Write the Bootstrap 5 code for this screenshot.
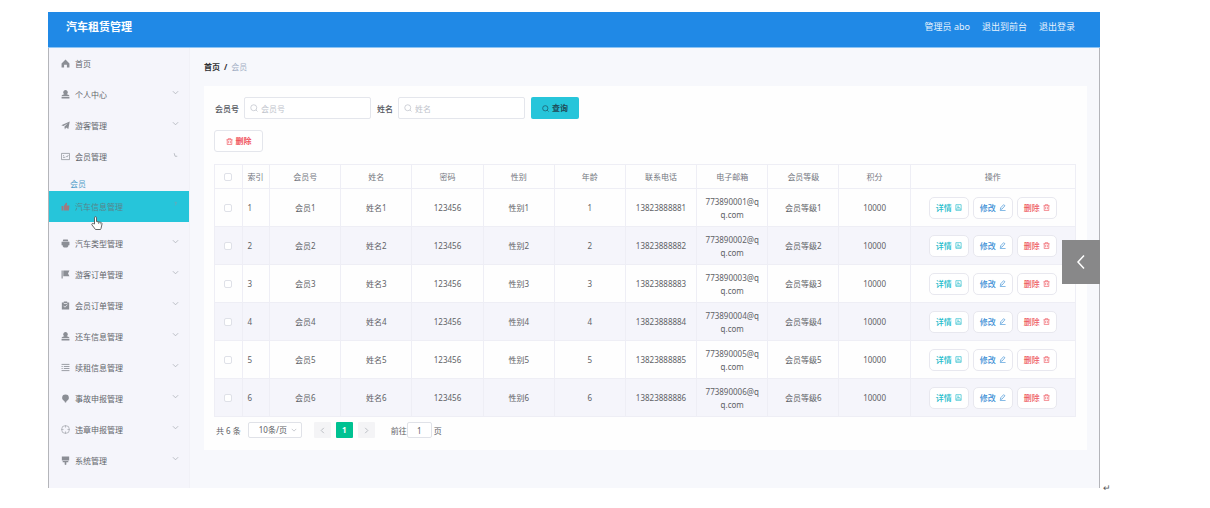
<!DOCTYPE html>
<html lang="zh-CN">
<head>
<meta charset="utf-8">
<meta name="viewport" content="width=device-width, initial-scale=1">
<title>汽车租赁管理</title>
<link href="https://cdn.jsdelivr.net/npm/bootstrap@5.3.0/dist/css/bootstrap.min.css" rel="stylesheet">
<style>
  body { font-family: "Noto Sans", "Noto Sans CJK SC", sans-serif; font-size: 8px; line-height: 13px; color: #606266; background: #fff; }
  a { text-decoration: none; }
  button, input, select { font-family: inherit; }
  svg { fill: none; stroke: currentColor; flex: none; }
  .sheet { padding: 12px 0 16px 48px; }
  .frame { min-width: 0; }
  .sheet-margin { width: 110px; padding-left: 3px; font-size: 9px; line-height: 9px; color: #555; margin-bottom: -4px; }
  .topbar { height: 36px; background: #2089e6; border-bottom: 1px solid #8cc4f4; padding: 0 25px 6px 18px; }
  .brand { font-size: 11px; font-weight: 700; color: #fff; }
  .topbar-links { font-size: 9px; gap: 12px; color: #e6f2fd; }
  .topbar-links a { color: inherit; }
  .shell { background: #f7f8fc; border: solid #b4b5ba; border-width: 0 1px; }
  .sidebar { width: 141px; background: #f5f5fb; border-right: 1px solid #f1f1f7; padding-bottom: 12px; }
  .menu-item { height: 31px; padding: 0 10px 1px 12px; color: #63666c; position: relative; }
  .menu-item .glyph { width: 9px; height: 9px; color: #8b8e95; margin-right: 5px; }
  .menu-item .caret { width: 7px; height: 7px; color: #b4b7be; margin-bottom: 3px; }
  .menu-item.current { background: #26c5da; color: #56858c; margin-bottom: 6px; }
  .menu-item.current .glyph { color: #a07a80; }
  .menu-item.current .caret { color: #70a5b5; }
  .submenu { height: 19px; padding: 5px 0 0 21px; line-height: 13px; }
  .submenu a { color: #4f9cc8; }
  .hand { position: absolute; left: 42px; top: 25px; z-index: 2; }
  .workspace { padding: 0 12px 37px 14px; }
  .crumbs { height: 38px; padding-bottom: 2px; }
  .crumbs a { color: #303133; font-weight: 600; }
  .crumbs .sep { color: #303133; font-weight: 700; }
  .crumbs .here { color: #a3afc4; }
  .panel { background: #fefefe; padding: 11px 11px 12px 10px; }
  .search { gap: 5px; margin-bottom: 11px; }
  .search label { font-weight: 500; color: #55585e; padding-left: 1px; }
  .field { width: 127px; position: relative; }
  .field svg { position: absolute; left: 6px; top: 7px; color: #c0c4cc; }
  .field input { height: 22px; padding: 0 6px 0 16px; font-size: 8px; border: 1px solid #e4e6ec; border-radius: 2px; }
  .field input::placeholder { color: #c0c4cc; }
  .act { font-size: 8px; line-height: 12px; height: 22px; padding: 0; border-radius: 2px; display: inline-flex; align-items: center; justify-content: center; gap: 3px; }
  .act-query { width: 48px; background: #26c5da; color: #1e4a58; font-weight: 600; margin-left: 1px; }
  .act-remove { width: 49px; background: #fff; border-color: #e4e6ec; color: #f0525c; font-weight: 600; border-radius: 3px; }
  .act-row { width: 40px; background: #fff; border-color: #e8e8ef; border-radius: 5px; font-weight: 500; }
  .tone-view { color: #26bccb; } .tone-edit { color: #3b8fd6; } .tone-drop { color: #ee5a62; }
  .grid-table { table-layout: fixed; margin: 12px 0 5px; font-size: 8px; line-height: 13px; border-color: #eeeef5; text-align: center; }
  .grid-table > :not(caption) > * > * { padding: 0 8px; color: #606266; background: none; box-shadow: none; word-break: break-all; vertical-align: middle; }
  .grid-table > thead > tr > th { height: 24px; font-weight: 400; color: #74777e; }
  .grid-table td { height: 38px; }
  .grid-table > tbody > tr:nth-child(even) { background: #f5f5fb; }
  .grid-table > :not(caption) > * > .c-idx { text-align: left; padding: 0 0 0 5px; }
  .grid-table > :not(caption) > * > .c-pick { padding: 0; }
  .grid-table > :not(caption) > * > .c-act { padding: 0; }
  .tick { width: 8px; height: 8px; margin: 0 auto; display: block; border: 1px solid #dfe1e8; border-radius: 1px; }
  .pager { padding-left: 2px; color: #606266; }
  .pager select { width: 54px; height: 16px; font-size: 8px; line-height: 12px; padding: 0 14px 0 10px; border: 1px solid #e0e2e8; border-radius: 2px; color: #606266; margin: 0 12px 0 7px; background-size: 6px 6px; background-position: right 4px center;
    background-image: url("data:image/svg+xml,%3Csvg xmlns='http://www.w3.org/2000/svg' viewBox='0 0 8 8'%3E%3Cpath d='M1 2.5 4 5.5 7 2.5' fill='none' stroke='%23b8bbc3'/%3E%3C/svg%3E"); }
  .page-steps { gap: 5px; }
  .page-btn { width: 17px; height: 16px; padding: 0; font-size: 8px; line-height: 12px; border: 0; border-radius: 1px; background: #f4f4f6; color: #b4b7be; display: flex; align-items: center; justify-content: center; }
  .page-btn.on { background: #00c292; color: #fff; font-weight: 700; }
  .pager label { margin-left: 16px; }
  .pager input { width: 25px; height: 16px; padding: 0; text-align: center; font-size: 8px; border: 1px solid #e0e2e8; border-radius: 2px; color: #606266; margin: 0 2px 0 0; }
  .drawer-tab { position: absolute; right: 0; top: 48%; width: 38px; height: 44px; padding: 0; border: 0; background: #888889; color: #fff; }
</style>
</head>
<body>
<svg width="0" height="0" class="position-absolute" aria-hidden="true">
  <symbol id="i-home" viewBox="0 0 16 16"><path d="M8 1 15 8v7h-4.500v-5h-5v5H1V8z" fill="currentColor" stroke="none"/></symbol>
  <symbol id="i-user" viewBox="0 0 16 16"><path d="M8 0a4 4 0 0 1 2 7.500c3 .5 5 1.500 5 3.500H1c0-2 2-3 5-3.500A4 4 0 0 1 8 0zM1 12.500h14V15H1z" fill="currentColor" stroke="none"/></symbol>
  <symbol id="i-plane" viewBox="0 0 16 16"><path d="M15.500 1 13 14l-4-2.500L7 15l-1-5 6-6-7.500 5L.5 7.500z" fill="currentColor" stroke="none"/></symbol>
  <symbol id="i-card" viewBox="0 0 16 16"><path d="M.8 2.500h14.400v11H.8zM3.500 9.500h4M3.500 6.500h2M9 7.500l1.500 1.500L13 5.500" stroke-width="1.300"/></symbol>
  <symbol id="i-thumb" viewBox="0 0 16 16"><path d="M1 7h3v8H1zM5 7l4-6 2 1-1 4h5l-1 9H5z" fill="currentColor" stroke="none"/></symbol>
  <symbol id="i-print" viewBox="0 0 16 16"><path d="M4 1h8l1 3H3zM1 5h14v6h-2v2l-2 2H5l-2-2v-2H1z" fill="currentColor" stroke="none"/></symbol>
  <symbol id="i-flag" viewBox="0 0 16 16"><path d="M1 1h2v14H1zM4 1h11l-2.500 5 2.500 5H4z" fill="currentColor" stroke="none"/></symbol>
  <symbol id="i-clip" viewBox="0 0 16 16"><path d="M1.500 2.500H5V1h6v1.500h3.500V15h-13z" fill="currentColor" stroke="none"/><path d="M4.500 8.500 7 11l4.500-4.500M5 4.500h6" stroke="#f5f5fb" stroke-width="1.400"/></symbol>
  <symbol id="i-list" viewBox="0 0 16 16"><path d="M1 2.500h14M1 13.500h14M5 6.200h10M5 9.800h10M1 6.200h2M1 9.800h2" stroke-width="1.500"/></symbol>
  <symbol id="i-balloon" viewBox="0 0 16 16"><path d="M8 1a6 6 0 0 1 6 6c0 2.500-2 4.500-4 5.500L9 15H7l-1-2.500C4 11.500 2 9.500 2 7a6 6 0 0 1 6-6z" fill="currentColor" stroke="none"/></symbol>
  <symbol id="i-aim" viewBox="0 0 16 16"><circle cx="8" cy="8" r="7"/><path d="M8 1v3.500M8 11.500V15M1 8h3.500M11.500 8H15"/></symbol>
  <symbol id="i-board" viewBox="0 0 16 16"><path d="M1.500 1h13v7h-13zM3 9h10v2H9.500v4L8 16l-1.500-1v-4H3z" fill="currentColor" stroke="none"/></symbol>
  <symbol id="i-down" viewBox="0 0 8 8"><path d="M1 2.500 4 5.500 7 2.500"/></symbol>
  <symbol id="i-turn" viewBox="0 0 8 8"><path d="M2.500 2.500 3.500 6H6"/></symbol>
  <symbol id="i-hook" viewBox="0 0 8 8"><path d="M3 1.500h2L4 5"/></symbol>
  <symbol id="i-find" viewBox="0 0 16 16"><circle cx="7.500" cy="7.500" r="6" stroke-width="1.500"/><path d="m12 12 3 3" stroke-width="1.500"/></symbol>
  <symbol id="i-bin" viewBox="0 0 16 16"><path d="M1 4h14M5 4V1.500h6V4M2.800 4v11h10.400V4M6 7v5M10 7v5" stroke-width="1.500"/></symbol>
  <symbol id="i-doc" viewBox="0 0 16 16"><path d="M2 1.500h12v13H2zM5 5h4M5 8h6M2 11.500h12" stroke-width="1.500"/></symbol>
  <symbol id="i-pen" viewBox="0 0 16 16"><path d="M10.500 1.500 13.500 4 7 11.500l-4 1 1-4zM2 15h13" stroke-width="1.500"/></symbol>
</svg>

<div class="sheet d-flex align-items-end">
  <div class="frame flex-grow-1 position-relative">
    <header class="topbar d-flex align-items-center justify-content-between">
      <div class="brand">汽车租赁管理</div>
      <nav class="topbar-links d-flex">
        <span>管理员 abo</span><a href="#">退出到前台</a><a href="#">退出登录</a>
      </nav>
    </header>

    <div class="shell d-flex">
      <nav class="sidebar flex-shrink-0" id="menu"></nav>

      <main class="workspace flex-grow-1">
        <nav class="crumbs d-flex align-items-center gap-1">
          <a href="#">首页</a><span class="sep">/</span><span class="here">会员</span>
        </nav>

        <section class="panel">
          <form class="search d-flex align-items-center">
            <label for="no">会员号</label>
            <div class="field"><svg width="8" height="8"><use href="#i-find"/></svg><input id="no" class="form-control" type="text" placeholder="会员号"></div>
            <label for="name">姓名</label>
            <div class="field"><svg width="8" height="8"><use href="#i-find"/></svg><input id="name" class="form-control" type="text" placeholder="姓名"></div>
            <button type="button" class="btn act act-query"><svg width="7" height="7"><use href="#i-find"/></svg>查询</button>
          </form>
          <button type="button" class="btn act act-remove"><svg width="7" height="7"><use href="#i-bin"/></svg>删除</button>

          <table class="table table-bordered grid-table">
            <colgroup>
              <col style="width:3.2%"><col style="width:3.2%"><col><col><col><col><col><col><col><col><col><col style="width:19.2%">
            </colgroup>
            <thead><tr>
              <th class="c-pick"><input type="checkbox" class="form-check-input tick" aria-label="全选"></th>
              <th class="c-idx">索引</th><th>会员号</th><th>姓名</th><th>密码</th><th>性别</th><th>年龄</th><th>联系电话</th><th>电子邮箱</th><th>会员等级</th><th>积分</th><th>操作</th>
            </tr></thead>
            <tbody id="rows"></tbody>
          </table>

          <div class="pager d-flex align-items-center">
            <span>共 6 条</span>
            <select class="form-select" aria-label="每页条数"><option>10条/页</option></select>
            <div class="page-steps d-flex">
              <button type="button" class="page-btn" aria-label="上一页"><svg width="7" height="7" viewBox="0 0 8 8"><path d="M5.500 1 2.500 4l3 3"/></svg></button>
              <button type="button" class="page-btn on">1</button>
              <button type="button" class="page-btn" aria-label="下一页"><svg width="7" height="7" viewBox="0 0 8 8"><path d="m2.500 1 3 3-3 3"/></svg></button>
            </div>
            <label for="goto">前往</label>
            <input id="goto" class="form-control" type="text" value="1"><span>页</span>
          </div>
        </section>
      </main>
    </div>
    <button type="button" class="drawer-tab" aria-label="展开"><svg width="12" height="16" viewBox="0 0 12 16"><path d="M9 1.500 3 8l6 6.500" stroke-width="1.500"/></svg></button>
  </div>
  <div class="sheet-margin flex-shrink-0">↵</div>
</div>

<script src="https://cdn.jsdelivr.net/npm/bootstrap@5.3.0/dist/js/bootstrap.bundle.min.js"></script>
<script>
  const menu = [
    ['home', '首页', ''], ['user', '个人中心', 'down'], ['plane', '游客管理', 'down'],
    ['card', '会员管理', 'turn', '会员'], ['thumb', '汽车信息管理', 'hook', '', true],
    ['print', '汽车类型管理', 'down'], ['flag', '游客订单管理', 'down'], ['clip', '会员订单管理', 'down'],
    ['user', '还车信息管理', 'down'], ['list', '续租信息管理', 'down'], ['balloon', '事故申报管理', 'down'],
    ['aim', '违章申报管理', 'down'], ['board', '系统管理', 'down']
  ];
  const hand = '<svg class="hand" width="12" height="14" viewBox="0 0 12 14"><path d="M3.500 8V1.800C3.500.3 5.500.3 5.500 1.800V5.500L9.500 6.300C10.500 6.600 11 7 11 8L10 12.500 9.500 13.500H4.500L1 9C.3 8 1.500 7 2.400 7.600z" fill="#fff" stroke="#555" stroke-width=".9"/><path d="M7.500 6v2M9.300 6.500v1.800" stroke="#777" stroke-width=".7"/></svg>';
  document.getElementById('menu').innerHTML = menu.map(([icon, text, caret, sub, current]) =>
    `<a href="#" class="menu-item d-flex align-items-center${current ? ' current' : ''}"><svg class="glyph"><use href="#i-${icon}"/></svg><span class="flex-grow-1">${text}</span>${caret ? `<svg class="caret"><use href="#i-${caret}"/></svg>` : ''}${current ? hand : ''}</a>` +
    (sub ? `<div class="submenu"><a href="#">${sub}</a></div>` : '')).join('');

  const act = (tone, text, icon) => `<button type="button" class="btn act act-row tone-${tone}">${text}<svg width="7" height="7"><use href="#i-${icon}"/></svg></button>`;
  document.getElementById('rows').innerHTML = [1, 2, 3, 4, 5, 6].map(n => `<tr>
    <td class="c-pick"><input type="checkbox" class="form-check-input tick" aria-label="选择会员${n}"></td>
    <td class="c-idx">${n}</td><td>会员${n}</td><td>姓名${n}</td><td>123456</td><td>性别${n}</td><td>${n}</td>
    <td>1382388888${n}</td><td>77389000${n}@qq.com</td><td>会员等级${n}</td><td>10000</td>
    <td class="c-act"><div class="d-flex justify-content-center gap-1">${act('view', '详情', 'doc')}${act('edit', '修改', 'pen')}${act('drop', '删除', 'bin')}</div></td></tr>`).join('');
</script>
</body>
</html>
